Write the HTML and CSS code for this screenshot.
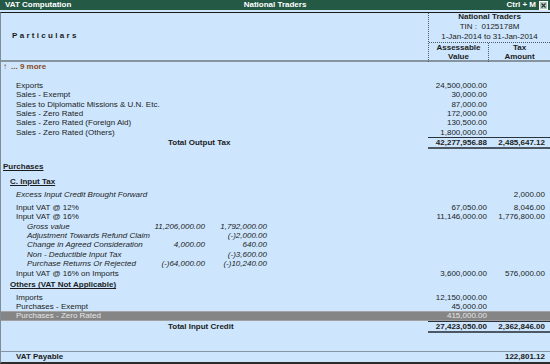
FILE: index.html
```html
<!DOCTYPE html>
<html>
<head>
<meta charset="utf-8">
<link rel="stylesheet" href="styles.css">
</head>
<body>
<div class="screen">
  <div class="titlebar">
    <span class="t-left">VAT Computation</span>
    <span class="t-center">National Traders</span>
    <span class="t-right">Ctrl + M <svg class="close" width="9" height="9" viewBox="0 0 9 9"><rect x="0.5" y="0.5" width="8" height="8" fill="#b9c6c0" stroke="#ffffff"/><path d="M2.5 2.5 L6.5 6.5 M6.5 2.5 L2.5 6.5" stroke="#1c3a30" stroke-width="1.1"/></svg></span>
  </div>
  <div class="frame">
    <div class="header">
      <div class="h-part"><span class="particulars">Particulars</span></div>
      <div class="h-right">
        <div class="company">
          <div class="cname">National Traders</div>
          <div>TIN :&nbsp; 0125178M</div>
          <div>1-Jan-2014 to 31-Jan-2014</div>
        </div>
        <div class="cols">
          <div class="col-h">Assessable<br>Value</div>
          <div class="col-h col-tax">Tax<br>Amount</div>
        </div>
      </div>
    </div>

    <div class="body">
      <div class="row"><div class="c p0 more"><span class="arrow">&#8593;</span><b>... 9 more</b></div><div></div><div></div></div>

      <div class="row gap-blank"><div class="c p2">Exports</div><div class="amt">24,500,000.00</div><div class="tax"></div></div>
      <div class="row"><div class="c p2">Sales - Exempt</div><div class="amt">30,000.00</div><div class="tax"></div></div>
      <div class="row"><div class="c p2">Sales to Diplomatic Missions &amp; U.N. Etc.</div><div class="amt">87,000.00</div><div class="tax"></div></div>
      <div class="row"><div class="c p2">Sales - Zero Rated</div><div class="amt">172,000.00</div><div class="tax"></div></div>
      <div class="row"><div class="c p2">Sales - Zero Rated (Foreign Aid)</div><div class="amt">130,500.00</div><div class="tax"></div></div>
      <div class="row"><div class="c p2">Sales - Zero Rated (Others)</div><div class="amt">1,800,000.00</div><div class="tax"></div></div>
      <div class="row total"><div class="c ptot">Total Output Tax</div><div class="amt">42,277,956.88</div><div class="tax">2,485,647.12</div></div>

      <div class="row gap-purch"><div class="c p0 head">Purchases</div><div></div><div></div></div>
      <div class="row gap-input"><div class="c p1 head">C. Input Tax</div><div></div><div></div></div>
      <div class="row gap-excess"><div class="c p2 it">Excess Input Credit Brought Forward</div><div class="amt"></div><div class="tax">2,000.00</div></div>
      <div class="row gap-small"><div class="c p2">Input VAT @ 12%</div><div class="amt">67,050.00</div><div class="tax">8,046.00</div></div>
      <div class="row"><div class="c p2">Input VAT @ 16%</div><div class="amt">11,146,000.00</div><div class="tax">1,776,800.00</div></div>
      <div class="row"><div class="c sub"><span>Gross value</span><span class="sv">11,206,000.00</span><span class="sv">1,792,000.00</span></div><div></div><div></div></div>
      <div class="row"><div class="c sub"><span>Adjustment Towards Refund Claim</span><span class="sv"></span><span class="sv">(-)2,000.00</span></div><div></div><div></div></div>
      <div class="row"><div class="c sub"><span>Change in Agreed Consideration</span><span class="sv">4,000.00</span><span class="sv">640.00</span></div><div></div><div></div></div>
      <div class="row"><div class="c sub"><span>Non - Deductible Input Tax</span><span class="sv"></span><span class="sv">(-)3,600.00</span></div><div></div><div></div></div>
      <div class="row"><div class="c sub"><span>Purchase Returns Or Rejected</span><span class="sv">(-)64,000.00</span><span class="sv">(-)10,240.00</span></div><div></div><div></div></div>
      <div class="row"><div class="c p2">Input VAT @ 16% on Imports</div><div class="amt">3,600,000.00</div><div class="tax">576,000.00</div></div>

      <div class="row gap-others"><div class="c p1 head">Others (VAT Not Applicable)</div><div></div><div></div></div>
      <div class="row gap-small"><div class="c p2">Imports</div><div class="amt">12,150,000.00</div><div class="tax"></div></div>
      <div class="row"><div class="c p2">Purchases - Exempt</div><div class="amt">45,000.00</div><div class="tax"></div></div>
      <div class="row sel"><div class="c p2">Purchases - Zero Rated</div><div class="amt">415,000.00</div><div class="tax"></div></div>
      <div class="row total"><div class="c ptot">Total Input Credit</div><div class="amt">27,423,050.00</div><div class="tax">2,362,846.00</div></div>

      <div class="sep"></div>
      <div class="row payable"><div class="c p2"><b>VAT Payable</b></div><div class="amt"></div><div class="tax"><b>122,801.12</b></div></div>
    </div>
  </div>
</div>
</body>
</html>
```
FILE: styles.css
```css
html, body {
  margin: 0;
  padding: 0;
  background: #cde6fd;
}
.screen {
  width: 550px;
  height: 364px;
  overflow: hidden;
  font-family: "Liberation Sans", Arial, sans-serif;
  font-size: 8px;
  color: #1c1c1c;
  background: #cde6fd;
}
.titlebar {
  height: 10px;
  line-height: 10px;
  background: #245946;
  color: #ffffff;
  font-weight: bold;
  display: grid;
  grid-template-columns: 1fr auto 1fr;
  margin-bottom: 2px;
}
.t-left { padding-left: 5px; }
.t-center { justify-self: center; }
.t-right {
  justify-self: end;
  display: flex;
  align-items: center;
  gap: 3px;
  padding-right: 2px;
}
.close { display: block; }

.frame {
  box-sizing: border-box;
  height: 352px;
  border-top: 1px solid #1a1a1a;
  border-bottom: 2px solid #2c2c2c;
  border-left: 1px solid #7f8d9b;
}
.header {
  height: 47px;
  border-bottom: 2px solid #8794a0;
  display: grid;
  grid-template-columns: 427px 122px;
}
.h-part {
  padding-top: 18px;
  padding-left: 11px;
  line-height: 10px;
}
.particulars {
  font-weight: bold;
  letter-spacing: 2.3px;
}
.h-right {
  border-left: 1px dotted #4f5b66;
  display: flex;
  flex-direction: column;
}
.company {
  margin-top: -1px;
  line-height: 10px;
  text-align: center;
  border-bottom: 1px dotted #4f5b66;
  height: 30px;
}
.cname { font-weight: bold; }
.cols {
  display: grid;
  grid-template-columns: 59px 62px;
  flex: 1;
}
.col-h {
  font-weight: bold;
  text-align: center;
  line-height: 9.4px;
  white-space: nowrap;
}
.col-tax { border-left: 1px dotted #4f5b66; }

.body {
  display: flex;
  flex-direction: column;
}
.row {
  display: grid;
  grid-template-columns: 427px 60px 62px;
  height: 9.4px;
  line-height: 9.4px;
  white-space: nowrap;
}
.amt { text-align: right; padding-right: 1px; }
.tax { text-align: right; padding-right: 5px; }
.p0 { padding-left: 2px; }
.p1 { padding-left: 9px; }
.p2 { padding-left: 15px; }
.ptot { padding-left: 167px; font-weight: bold; }
.it { font-style: italic; }
.head { font-weight: bold; text-decoration: underline; }

.more { color: #8a4a22; }
.arrow {
  display: inline-block;
  width: 8px;
  font-weight: normal;
}

.sub {
  padding-left: 26px;
  display: grid;
  grid-template-columns: 118px 60px 62px;
  font-style: italic;
}
.sv { text-align: right; }

.gap-blank { margin-top: 9.4px; }
.gap-purch { margin-top: 12.4px; }
.gap-input { margin-top: 5.6px; }
.gap-excess { margin-top: 4.6px; }
.gap-small { margin-top: 2.9px; }
.gap-others { margin-top: 2.5px; }

.total {
  height: auto;
  line-height: 9px;
}
.total > div {
  height: 9px;
  border-top: 1px solid transparent;
  border-bottom: 2px solid transparent;
  font-weight: bold;
}
.total > .amt, .total > .tax {
  border-top-color: #2a333d;
  border-bottom-color: #4c5866;
}

.sel {
  background: #858585;
  color: #e6e6e6;
  box-shadow: inset 0 1px 0 #a5a5a5, inset 0 -1px 0 #a0a0a0;
}

.sep {
  margin-top: 17.9px;
  height: 1px;
  background: #8693a0;
}
.payable { margin-top: 0.6px; }
```
